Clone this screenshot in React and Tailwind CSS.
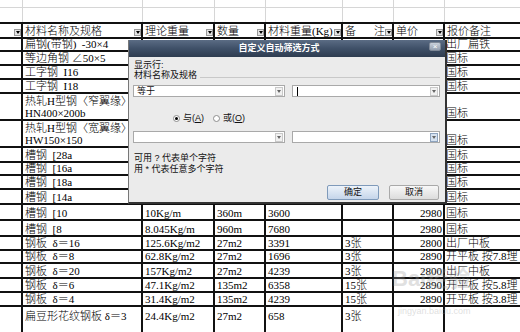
import React from 'react';

const cols = ['w-[23px]', 'w-[120px]', 'w-[72px]', 'w-[51px]', 'w-[77px]', 'w-[51px]', 'w-[51px]', 'w-[110px]'];

// rows 1-10 sit under the dialog, only column B and the last column show
const rows = [
  { ht: 'h-[13px]', b: ['扁钢(带钢)  -30×4'], c: '', d: '', e: '', f: '', g: '', h: '出厂扁铁' },
  { ht: 'h-[14px]', b: ['等边角钢 ∠50×5'], c: '', d: '', e: '', f: '', g: '', h: '国标' },
  { ht: 'h-[14px]', b: ['工字钢  I16'], c: '', d: '', e: '', f: '', g: '', h: '国标' },
  { ht: 'h-[14px]', b: ['工字钢  I18'], c: '', d: '', e: '', f: '', g: '', h: '国标' },
  { ht: 'h-[27px]', b: ['热轧H型钢〈窄翼缘〉', 'HN400×200b'], c: '', d: '', e: '', f: '', g: '', h: '国标' },
  { ht: 'h-[27px]', b: ['热轧H型钢〈宽翼缘〉', 'HW150×150'], c: '', d: '', e: '', f: '', g: '', h: '国标' },
  { ht: 'h-[15px]', b: ['槽钢  [28a'], c: '', d: '', e: '', f: '', g: '', h: '国标' },
  { ht: 'h-[13px]', b: ['槽钢  [16a'], c: '', d: '', e: '', f: '', g: '', h: '国标' },
  { ht: 'h-[14px]', b: ['槽钢  [18a'], c: '', d: '', e: '', f: '', g: '', h: '国标' },
  { ht: 'h-[15px]', b: ['槽钢  [14a'], c: '', d: '', e: '', f: '', g: '', h: '国标' },
  { ht: 'h-[16px]', b: ['槽钢  [10'], c: '10Kg/m', d: '360m', e: '3600', f: '', g: '2980', h: '国标' },
  { ht: 'h-[16px]', b: ['槽钢  [8'], c: '8.045Kg/m', d: '960m', e: '7680', f: '', g: '2980', h: '国标' },
  { ht: 'h-[14px]', b: ['钢板  δ＝16'], c: '125.6Kg/m2', d: '27m2', e: '3391', f: '3张', g: '2800', h: '出厂中板' },
  { ht: 'h-[13px]', b: ['钢板  δ＝8'], c: '62.8Kg/m2', d: '27m2', e: '1696', f: '3张', g: '2890', h: '开平板 按7.8理' },
  { ht: 'h-[15px]', b: ['钢板  δ＝20'], c: '157Kg/m2', d: '27m2', e: '4239', f: '3张', g: '2800', h: '出厂中板' },
  { ht: 'h-[14px]', b: ['钢板  δ＝6'], c: '47.1Kg/m2', d: '135m2', e: '6358', f: '15张', g: '2890', h: '开平板 按5.8理' },
  { ht: 'h-[14px]', b: ['钢板  δ＝4'], c: '31.4Kg/m2', d: '135m2', e: '4239', f: '15张', g: '2890', h: '开平板 按3.8理' },
  { ht: 'h-[40px]', b: ['扁豆形花纹钢板 δ＝3'], c: '24.4Kg/m2', d: '27m2', e: '658', f: '3张', g: '', h: '', top: true },
];

const FilterArrow = () => (
  <div className="mb-px flex h-[7px] w-[7px] shrink-0 items-center justify-center border border-[#9a9a9a] bg-[#e4e4e4]">
    <svg width="4" height="3" viewBox="0 0 4 3">
      <path d="M0 0h4L2 3z" fill="#000" />
    </svg>
  </div>
);

const BlankRow = ({ ht, line }) => (
  <div className={`flex ${ht} ${line ? 'border-b border-[#d6d6d6]' : ''}`}>
    {cols.map((c, i) => (
      <div key={i} className={`${c} shrink-0 border-r border-[#d6d6d6]`} />
    ))}
  </div>
);

const HeaderRow = () => {
  const labels = ['', '材料名称及规格', '理论重量', '数量', '材料重量(Kg)', null, '单价', '报价备注'];
  return (
    <div className="flex h-[17px] border-y-2 border-[#111]">
      {labels.map((t, i) => (
        <div key={i} className={`${cols[i]} flex shrink-0 items-end justify-between overflow-hidden border-r-2 border-[#111] pl-[2px] leading-[12px]`}>
          {t === null ? (
            <span className="flex">
              <span>备</span>
              <span className="ml-[18px]">注</span>
            </span>
          ) : (
            <span className="whitespace-pre">{t}</span>
          )}
          {i < 7 && <FilterArrow />}
        </div>
      ))}
    </div>
  );
};

const DataRow = ({ r }) => {
  const align = r.top ? 'items-start pt-[3px]' : 'items-end';
  return (
    <div className={`flex ${r.ht} border-b-2 border-[#111]`}>
      <div className={`${cols[0]} shrink-0 border-r-2 border-[#111]`} />
      <div className={`${cols[1]} flex shrink-0 flex-col overflow-hidden border-r-2 border-[#111] pl-[2px] leading-[12px] ${r.top ? 'justify-start pt-[3px]' : 'justify-end'}`}>
        {r.b.map((l, i) => (
          <span key={i} className="whitespace-pre">{l}</span>
        ))}
      </div>
      <div className={`${cols[2]} flex shrink-0 overflow-hidden border-r-2 border-[#111] pl-[2px] leading-[12px] ${align}`}>
        <span className="whitespace-pre">{r.c}</span>
      </div>
      <div className={`${cols[3]} flex shrink-0 overflow-hidden border-r-2 border-[#111] pl-[2px] leading-[12px] ${align}`}>
        <span className="whitespace-pre">{r.d}</span>
      </div>
      <div className={`${cols[4]} flex shrink-0 overflow-hidden border-r-2 border-[#111] pl-[2px] leading-[12px] ${align}`}>
        <span className="whitespace-pre">{r.e}</span>
      </div>
      <div className={`${cols[5]} flex shrink-0 overflow-hidden border-r-2 border-[#111] pl-[2px] leading-[12px] ${align}`}>
        <span className="whitespace-pre">{r.f}</span>
      </div>
      <div className={`${cols[6]} flex shrink-0 justify-end overflow-hidden border-r-2 border-[#111] pr-[1px] leading-[12px] ${align}`}>
        <span className="whitespace-pre">{r.g}</span>
      </div>
      <div className={`${cols[7]} flex shrink-0 overflow-hidden pl-[1px] leading-[12px] ${align}`}>
        <span className="whitespace-pre">{r.h}</span>
      </div>
    </div>
  );
};

const Combo = ({ w, text, cursor, hot }) => (
  <div className={`flex h-[12px] items-center border border-[#a9a9a9] bg-white ${w}`}>
    <div className="flex flex-1 items-center pl-[3px] text-[9px] leading-[10px]">
      {text}
      {cursor && <span className="ml-[1px] inline-block h-[9px] w-px bg-black" />}
    </div>
    <div className={`mr-[1px] flex h-[9px] w-[8px] items-center justify-center border ${hot ? 'border-[#8ea4bf] bg-[#d6e2f0]' : 'border-[#c9c9c9] bg-[#f1f1f1]'}`}>
      <svg width="4" height="3" viewBox="0 0 4 3">
        <path d="M0 0h4L2 3z" fill="#666" />
      </svg>
    </div>
  </div>
);

const Radio = ({ on }) => (
  <span className="flex h-[7px] w-[7px] items-center justify-center rounded-full border border-[#8d8d8d] bg-white">
    {on && <span className="h-[3px] w-[3px] rounded-full bg-black" />}
  </span>
);

const Dialog = () => (
  <div className="absolute left-[128px] top-[40px] flex h-[164px] w-[319px] flex-col border-l border-[#777] border-r-2 border-r-[#333] border-b-2 border-b-[#333] bg-[#ebebeb] font-['Liberation_Sans','Noto_Sans_CJK_SC',sans-serif] text-[9px] font-normal text-[#111]">
    <div className="flex h-[17px] shrink-0 items-start bg-gradient-to-b from-[#5b6c84] via-[#3f5068] to-[#2e3c50]">
      <div className="flex-1 pt-[3px] text-center font-semibold leading-[11px] text-white">自定义自动筛选方式</div>
      <div className="mr-[4px] mt-[2px] flex h-[9px] w-[12px] items-center justify-center rounded-[2px] border border-[#7d8796] bg-gradient-to-b from-[#c9d0da] to-[#96a1b1] text-[8px] leading-[8px] text-white">
        ×
      </div>
    </div>
    <div className="flex flex-1 flex-col pl-[4px] pr-[5px]">
      <div className="mt-[3px] pl-[1px] leading-[10px]">显示行:</div>
      <div className="flex items-end leading-[10px]">
        <span className="pl-[1px]">材料名称及规格</span>
        <span className="mb-[2px] ml-[3px] h-px flex-1 bg-[#c8c8c8]" />
      </div>
      <div className="mt-[5px] flex gap-[7px]">
        <Combo w="w-[152px]" text="等于" />
        <Combo w="w-[149px]" text="" cursor />
      </div>
      <div className="mt-[16px] flex h-[11px] items-center pl-[40px]">
        <Radio on />
        <span className="ml-[3px]">
          与(<u>A</u>)
        </span>
        <span className="ml-[9px]">
          <Radio />
        </span>
        <span className="ml-[3px]">
          或(<u>O</u>)
        </span>
      </div>
      <div className="mt-[7px] flex gap-[7px]">
        <Combo w="w-[152px]" text="" />
        <Combo w="w-[149px]" text="" hot />
      </div>
      <div className="mt-[10px] pl-[1px] leading-[11px]">可用 ? 代表单个字符</div>
      <div className="pl-[1px] leading-[11px]">用 * 代表任意多个字符</div>
      <div className="mt-[10px] flex justify-end gap-[10px] pr-[1px]">
        <div className="flex h-[15px] w-[52px] items-center justify-center rounded-[2px] border border-[#7f9aba] bg-gradient-to-b from-[#edf3fa] to-[#c5d5ea]">确定</div>
        <div className="flex h-[15px] w-[50px] items-center justify-center rounded-[2px] border border-[#a9a9a9] bg-gradient-to-b from-[#f8f8f8] to-[#dcdcdc]">取消</div>
      </div>
    </div>
  </div>
);

const Watermark = () => (
  <div className="pointer-events-none absolute left-[392px] top-[266px] flex flex-col font-['Liberation_Sans','Noto_Sans_CJK_SC',sans-serif] text-[#9a9a9a] opacity-30">
    <div className="text-[22px] font-bold leading-[26px]">Bai经验</div>
    <div className="ml-[6px] mt-[14px] text-[9px] leading-[10px]">jingyan.baidu.com</div>
  </div>
);

export default function App() {
  return (
    <div className="relative h-[332px] w-[520px] overflow-hidden bg-white font-['Liberation_Serif','Noto_Sans_CJK_SC',serif] text-[11px] font-light text-black">
      <BlankRow ht="h-[8px]" line />
      <BlankRow ht="h-[14px]" />
      <HeaderRow />
      {rows.map((r, i) => (
        <DataRow key={i} r={r} />
      ))}
      <Watermark />
      <Dialog />
    </div>
  );
}
